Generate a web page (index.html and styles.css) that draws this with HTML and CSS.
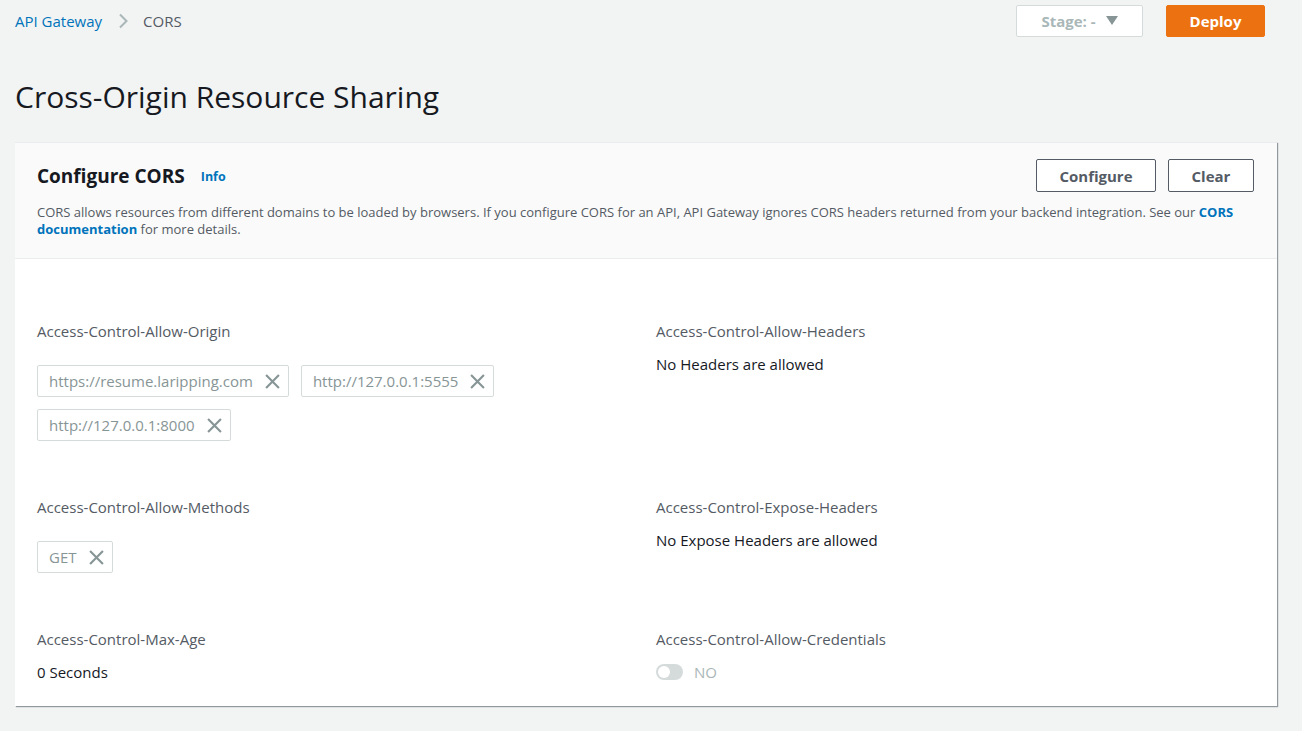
FILE: index.html
```html
<!DOCTYPE html>
<html lang="en">
<head>
<meta charset="utf-8">
<title>CORS</title>
<link rel="stylesheet" href="styles.css">
</head>
<body>
<header class="topbar">
  <nav class="crumbs">
    <a class="crumb-link" href="#">API Gateway</a>
    <svg class="crumb-sep" width="12" height="16" viewBox="0 0 12 16"><path d="M3 1.5 L9.5 8 L3 14.5" fill="none" stroke="#aab7b8" stroke-width="2"/></svg>
    <span class="crumb-current">CORS</span>
  </nav>
  <div class="top-actions">
    <button class="stage-btn">Stage: - <svg class="caret" width="12" height="10" viewBox="0 0 12 10"><path d="M0 0 H12 L6 9 Z" fill="#879596"/></svg></button>
    <button class="deploy-btn">Deploy</button>
  </div>
</header>

<h1 class="page-title">Cross-Origin Resource Sharing</h1>

<section class="panel">
  <div class="panel-head">
    <div class="head-row">
      <h2 class="panel-title">Configure CORS <a class="info" href="#">Info</a></h2>
      <div class="head-actions">
        <button class="btn btn-configure">Configure</button>
        <button class="btn btn-clear">Clear</button>
      </div>
    </div>
    <p class="desc">CORS allows resources from different domains to be loaded by browsers. If you configure CORS for an API, API Gateway ignores CORS headers returned from your backend integration. See our <a href="#" class="strong-link">CORS</a><br><a href="#" class="strong-link">documentation</a> for more details.</p>
  </div>
  <div class="panel-body">
    <div class="field">
      <div class="label">Access-Control-Allow-Origin</div>
      <div class="tokens">
        <span class="token">https://resume.laripping.com <svg class="x" viewBox="0 0 14 14"><path d="M1 1 L13 13 M13 1 L1 13" stroke="#879596" stroke-width="2"/></svg></span>
        <span class="token">http://127.0.0.1:5555 <svg class="x" viewBox="0 0 14 14"><path d="M1 1 L13 13 M13 1 L1 13" stroke="#879596" stroke-width="2"/></svg></span>
        <span class="token">http://127.0.0.1:8000 <svg class="x" viewBox="0 0 14 14"><path d="M1 1 L13 13 M13 1 L1 13" stroke="#879596" stroke-width="2"/></svg></span>
      </div>
    </div>
    <div class="field">
      <div class="label">Access-Control-Allow-Headers</div>
      <div class="value">No Headers are allowed</div>
    </div>
    <div class="field">
      <div class="label">Access-Control-Allow-Methods</div>
      <div class="tokens">
        <span class="token">GET <svg class="x" viewBox="0 0 14 14"><path d="M1 1 L13 13 M13 1 L1 13" stroke="#879596" stroke-width="2"/></svg></span>
      </div>
    </div>
    <div class="field">
      <div class="label">Access-Control-Expose-Headers</div>
      <div class="value">No Expose Headers are allowed</div>
    </div>
    <div class="field">
      <div class="label">Access-Control-Max-Age</div>
      <div class="value">0 Seconds</div>
    </div>
    <div class="field">
      <div class="label">Access-Control-Allow-Credentials</div>
      <div class="value toggle-row"><span class="toggle"><span class="knob"></span></span><span class="toggle-text">NO</span></div>
    </div>
  </div>
</section>
</body>
</html>
```
FILE: styles.css
```css
* { box-sizing: border-box; }
html, body { margin: 0; padding: 0; }
body {
  background: #f2f3f3;
  font-family: "Open Sans", "Noto Sans", Arial, sans-serif;
  font-size: 15px;
  color: #16191f;
  width: 1302px;
  height: 731px;
  overflow: hidden;
}
a { text-decoration: none; color: #0073bb; }
button { font-family: inherit; cursor: pointer; }

.topbar {
  display: flex;
  justify-content: space-between;
  align-items: flex-start;
  padding: 5px 37px 0 15px;
  height: 37px;
}
.crumbs {
  display: flex;
  align-items: center;
  height: 32px;
  font-size: 15px;
}
.crumb-link { color: #0073bb; }
.crumb-sep { margin: 0 14px 0 15px; }
.crumb-current { color: #545b64; }

.top-actions { display: flex; gap: 23px; }
.stage-btn {
  width: 127px;
  height: 32px;
  background: #fff;
  border: 1px solid #d5dbdb;
  border-radius: 2px;
  color: #aab7b8;
  font-weight: 700;
  font-size: 15px;
  display: flex;
  align-items: center;
  justify-content: center;
  gap: 10px;
  padding: 0;
  margin-left: 1px;
}
.deploy-btn {
  width: 99px;
  height: 32px;
  background: #ec7211;
  border: 1px solid #ec7211;
  border-radius: 2px;
  color: #fff;
  font-weight: 700;
  font-size: 15px;
  padding: 0;
}

.page-title {
  margin: 40px 0 0 15px;
  font-size: 30px;
  font-weight: 400;
  line-height: 40px;
  color: #16191f;
}

.panel {
  margin: 25px 25px 0 15px;
  background: #fff;
  box-shadow: 1px 1px 1px 0 rgba(0, 28, 36, 0.3), 1px 1px 1px 0 rgba(0,28,36,0.15);
  border-top: 1px solid #eaeded;
}
.panel-head {
  background: #fafafa;
  border-bottom: 1px solid #eaeded;
  padding: 15px 23px 20px 22px;
}
.head-row {
  display: flex;
  justify-content: space-between;
  align-items: center;
}
.panel-title {
  margin: 0;
  font-size: 19px;
  font-weight: 700;
  line-height: 32px;
  display: flex;
  align-items: center;
}
.info {
  font-size: 12.5px;
  font-weight: 700;
  margin-left: 16px;
  padding-top: 3px;
}
.head-actions { display: flex; gap: 12px; }
.btn {
  height: 33px;
  background: #fff;
  border: 1px solid #545b64;
  border-radius: 2px;
  color: #545b64;
  font-weight: 700;
  font-size: 15px;
  padding: 0;
}
.btn-configure { width: 120px; }
.btn-clear { width: 86px; }
.desc {
  margin: 11px 0 0 0;
  font-size: 13px;
  line-height: 17px;
  color: #545b64;
}
.strong-link { font-weight: 700; }

.panel-body {
  display: grid;
  grid-template-columns: 599px 599px;
  column-gap: 20px;
  row-gap: 56px;
  padding: 62px 22px 24px 22px;
}
.label {
  color: #545b64;
  line-height: 20px;
}
.value {
  margin-top: 13px;
  line-height: 20px;
}
.tokens {
  display: flex;
  flex-wrap: wrap;
  gap: 12px;
  margin-top: 24px;
}
.token {
  display: inline-flex;
  align-items: center;
  height: 32px;
  border: 1px solid #d5dbdb;
  border-radius: 2px;
  padding: 0 8px 0 11px;
  color: #879596;
  gap: 12px;
}
.x { width: 15px; height: 15px; }

.toggle-row { display: flex; align-items: center; }
.toggle {
  width: 27px;
  height: 16px;
  border-radius: 8px;
  background: #d5dbdb;
  position: relative;
  display: inline-block;
}
.knob {
  position: absolute;
  left: 2px;
  top: 2px;
  width: 12px;
  height: 12px;
  border-radius: 50%;
  background: #fff;
}
.toggle-text { color: #aab7b8; margin-left: 11px; }
```
